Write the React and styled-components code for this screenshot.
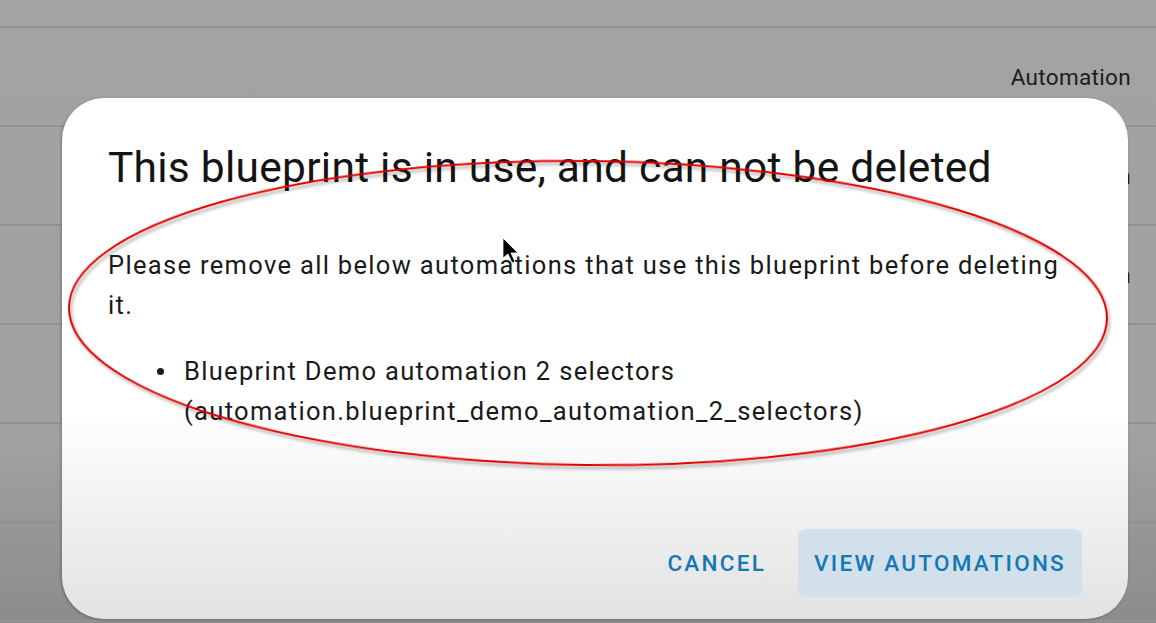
import React from "react";
import styled, { createGlobalStyle } from "styled-components";

const Global = createGlobalStyle`
  html, body { margin: 0; padding: 0; }
  body { font-family: Roboto, "Liberation Sans", sans-serif; }
`;

const Page = styled.div`
  position: relative;
  width: 1156px;
  height: 623px;
  overflow: hidden;
  background: linear-gradient(to bottom, #a3a3a3 0%, #a1a1a1 70%, #8c8c8c 100%);
`;

const Table = styled.div`
  display: flex;
  flex-direction: column;
`;

const HeaderStrip = styled.div`
  height: 26px;
  border-bottom: 2px solid #929292;
`;

const Row = styled.div`
  height: 97px;
  border-bottom: 2px solid #929292;
  display: flex;
  align-items: center;
  justify-content: flex-end;
  padding-right: 25px;
  font-size: 22.5px;
  color: #1c1c1c;
  letter-spacing: 0.015em;
`;

const Overlay = styled.div`
  position: absolute;
  left: 62px;
  top: 98px;
  width: 1066px;
  height: 521px;
`;

const Dialog = styled.div`
  box-sizing: border-box;
  width: 100%;
  height: 100%;
  border-radius: 42px;
  background: linear-gradient(to bottom, #ffffff 0%, #ffffff 60%, #e2e2e2 100%);
  box-shadow: -1px 1px 3px rgba(0, 0, 0, 0.25);
  padding: 46px 46px 22px 46px;
  display: flex;
  flex-direction: column;
`;

const Title = styled.h2`
  margin: 0;
  font-weight: 400;
  font-size: 42.5px;
  line-height: 48px;
  color: #141414;
  letter-spacing: 0.006em;
`;

const Body = styled.div`
  margin-top: 53px;
  font-size: 25.5px;
  line-height: 40px;
  color: #1a1a1a;
  letter-spacing: 0.052em;
`;

const Para = styled.p`
  margin: 0;
`;

const List = styled.ul`
  margin: 26px 0 0 0;
  padding-left: 46px;
  list-style: none;
`;

const Item = styled.li`
  display: flex;
`;

const BulletCol = styled.span`
  flex: 0 0 30px;
  display: flex;
  padding-top: 17px;
  padding-left: 3px;
  box-sizing: border-box;
`;

const Dot = styled.span`
  width: 7px;
  height: 7px;
  border-radius: 50%;
  background: #1a1a1a;
`;

const Actions = styled.div`
  margin-top: auto;
  display: flex;
  justify-content: flex-end;
  align-items: center;
  gap: 16px;
`;

const Button = styled.button`
  border: none;
  font-family: inherit;
  font-size: 22.5px;
  font-weight: 500;
  letter-spacing: 0.1em;
  color: #1379b4;
  height: 68px;
  padding: 0 16px;
  border-radius: 7px;
  background: ${(p) => (p.$filled ? "#d1e0ea" : "transparent")};
  cursor: pointer;
`;

const Marks = styled.svg`
  position: absolute;
  left: 0;
  top: 0;
  pointer-events: none;
`;

export default function App() {
  return (
    <Page>
      <Global />
      <Table>
        <HeaderStrip />
        <Row>Automation</Row>
        <Row>Automation</Row>
        <Row>Automation</Row>
        <Row />
        <Row />
        <Row />
      </Table>
      <Overlay>
        <Dialog>
          <Title>This blueprint is in use, and can not be deleted</Title>
          <Body>
            <Para>
              Please remove all below automations that use this blueprint before deleting it.
            </Para>
            <List>
              <Item>
                <BulletCol>
                  <Dot />
                </BulletCol>
                <span>
                  Blueprint Demo automation 2 selectors
                  <br />
                  (automation.blueprint_demo_automation_2_selectors)
                </span>
              </Item>
            </List>
          </Body>
          <Actions>
            <Button>CANCEL</Button>
            <Button $filled>VIEW AUTOMATIONS</Button>
          </Actions>
        </Dialog>
      </Overlay>
      <Marks width="1156" height="623" viewBox="0 0 1156 623">
        <defs>
          <filter id="sh" x="-10%" y="-10%" width="120%" height="130%">
            <feDropShadow dx="2" dy="3" stdDeviation="1.5" floodColor="#000" floodOpacity="0.35" />
          </filter>
        </defs>
        <ellipse
          cx="588"
          cy="313"
          rx="519"
          ry="152"
          fill="none"
          stroke="#e00000"
          strokeWidth="2"
          filter="url(#sh)"
          transform="rotate(0.6 588 313)"
        />
        <path
          d="M503 238 L503 258 L508 254 L512 263 L515 261.5 L511 253 L518 253 Z"
          fill="#000"
          stroke="#fff"
          strokeWidth="0.8"
          strokeLinejoin="round"
        />
      </Marks>
    </Page>
  );
}
